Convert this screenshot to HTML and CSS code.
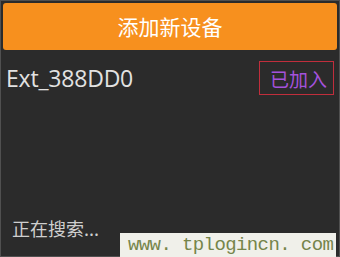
FILE: index.html
```html
<!DOCTYPE html>
<html>
<head>
<meta charset="utf-8">
<link rel="stylesheet" href="styles.css">
</head>
<body>
<div class="screen">
  <div class="header">添加新设备</div>
  <div class="row">
    <span class="name">Ext_388DD0</span>
    <span class="badge">已加入</span>
  </div>
  <div class="spacer"></div>
  <div class="footer">正在搜索...</div>
  <div class="watermark">www. tplogincn. com</div>
</div>
</body>
</html>
```
FILE: styles.css
```css
html, body {
  margin: 0;
  padding: 0;
  background: #2b2b2b;
}
.screen {
  position: relative;
  box-sizing: border-box;
  width: 340px;
  height: 257px;
  border: 1px solid #505050;
  background: #2b2b2b;
  display: flex;
  flex-direction: column;
  font-family: "Open Sans", "Noto Sans CJK SC", sans-serif;
}
.header {
  margin: 2px 2px 0 2px;
  height: 47px;
  background: #f7901e;
  border-radius: 3px;
  color: #ffffff;
  font-family: "Noto Sans CJK SC", sans-serif;
  font-size: 21px;
  display: flex;
  align-items: center;
  justify-content: center;
  padding-bottom: 2px;
  box-sizing: border-box;
}
.row {
  display: flex;
  justify-content: space-between;
  align-items: center;
  padding: 11px 5px 0 5px;
}
.name {
  color: #e2e2e2;
  font-size: 23px;
  line-height: 30px;
  letter-spacing: -0.2px;
}
.badge {
  box-sizing: border-box;
  width: 75px;
  height: 34px;
  border: 1px solid #c02e3c;
  color: #a452dc;
  font-family: "Noto Sans CJK SC", sans-serif;
  font-size: 19px;
  display: flex;
  align-items: center;
  justify-content: center;
  padding-left: 4px;
}
.spacer {
  flex: 1;
}
.footer {
  color: #cfcfcf;
  font-family: "Noto Sans CJK SC", sans-serif;
  font-size: 18px;
  line-height: 22px;
  padding: 0 0 17px 11px;
}
.watermark {
  position: absolute;
  left: 119px;
  top: 232px;
  right: 3px;
  bottom: -1px;
  background: #f0f0ea;
  color: #76854a;
  font-family: "Liberation Mono", monospace;
  font-size: 19px;
  letter-spacing: -0.6px;
  display: flex;
  align-items: center;
  padding-left: 8px;
}
```
